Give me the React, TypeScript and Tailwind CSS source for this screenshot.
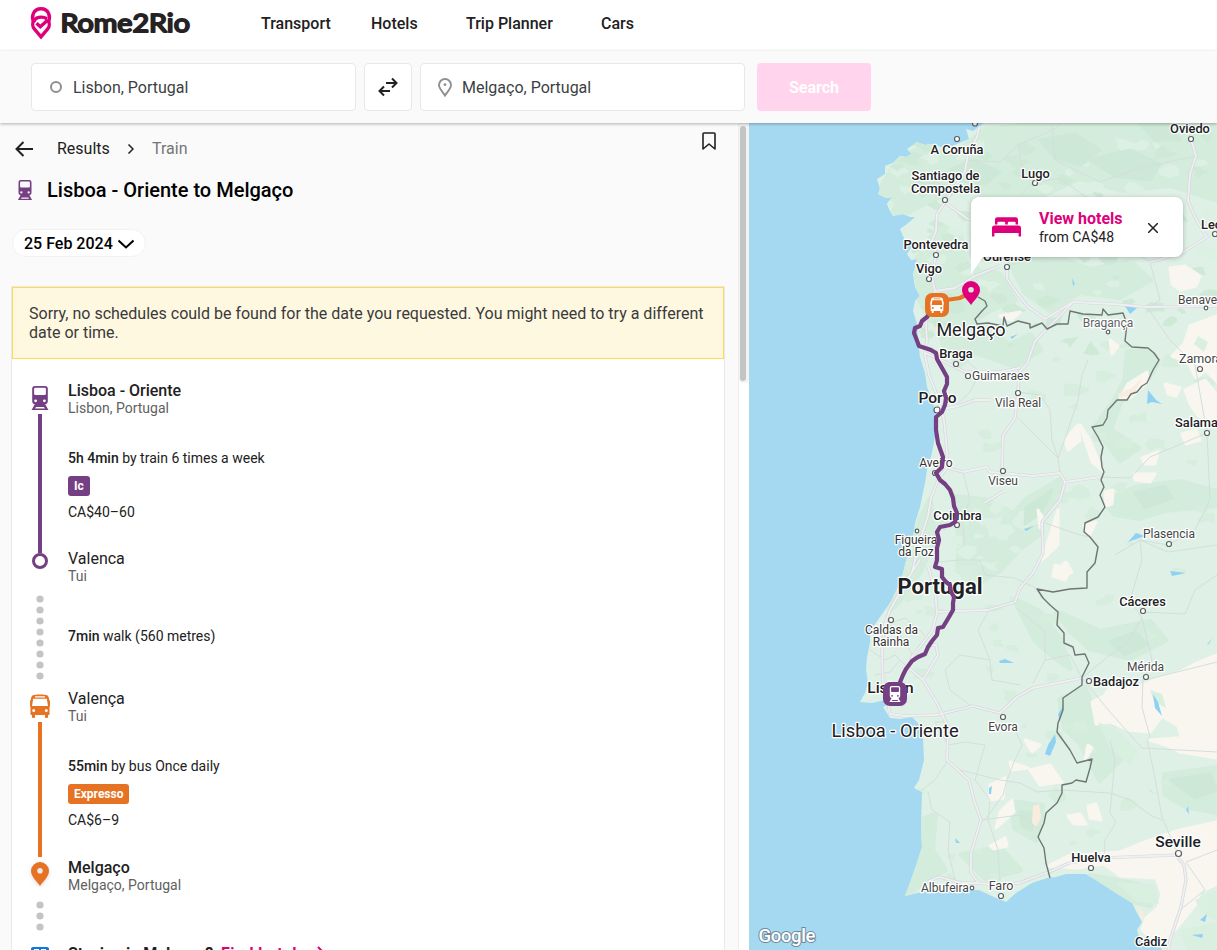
import React from "react";

const PURPLE = "#753f83";
const ORANGE = "#e57323";
const PINK = "#de007b";

function TrainIcon({ className, color }: { className: string; color: string }) {
  return (
    <svg className={className} viewBox="-0.5 0 18 24" fill={color}>
      <path
        fillRule="evenodd"
        d="M3.5 0h10A2.8 2.8 0 0 1 16.3 2.8V15a3.2 3.2 0 0 1-3.2 3.2H3.9A3.2 3.2 0 0 1 .7 15V2.8A2.8 2.8 0 0 1 3.500 0ZM3.800 1.800A1.200 1.200 0 0 0 2.600 3V7.800A1.200 1.200 0 0 0 3.800 9h9.400A1.200 1.200 0 0 0 14.400 7.800V3a1.200 1.200 0 0 0-1.200-1.200ZM4.100 13.400a1.400 1.400 0 1 0 0 2.800 1.400 1.400 0 0 0 0-2.800Zm8.800 0a1.400 1.400 0 1 0 0 2.800 1.400 1.400 0 0 0 0-2.800Z"
      />
      <path d="M3.600 17.500h9.800l2.400 4.500L17 24H0l1.200-2Zm.9 3.600-.8 1.400h9.600l-.8-1.400Z" fillRule="evenodd" />
    </svg>
  );
}

function BusIcon({ className, color }: { className: string; color: string }) {
  return (
    <svg className={className} viewBox="0 0 20 24" fill={color}>
      <path
        fillRule="evenodd"
        d="M3 1.300C5 .2 15 .2 17 1.300 18.800 2.200 19 4 19.200 6l.8 1v5.500l-.5.5v7.200a.8.800 0 0 1-.8.8H18v2a1 1 0 0 1-1 1h-1a1 1 0 0 1-1-1v-2H5v2a1 1 0 0 1-1 1H3a1 1 0 0 1-1-1v-2h-.7a.8.8 0 0 1-.8-.8V13L0 12.500V7l.8-1C1 4 1.200 2.200 3 1.300ZM5 2.200v1.200h10V2.200ZM3.200 4.800 2 12h16l-1.200-7.200ZM3.700 15a1.500 1.500 0 1 0 0 3 1.500 1.500 0 0 0 0-3Zm12.600 0a1.500 1.500 0 1 0 0 3 1.500 1.500 0 0 0 0-3Z"
      />
    </svg>
  );
}

function PinIcon({ className, color }: { className: string; color: string }) {
  return (
    <svg className={className} viewBox="0 0 18 24" fill={color}>
      <path
        fillRule="evenodd"
        d="M9 0a9 9 0 0 1 9 9c0 5.500-6 10.500-9 15C6 19.500 0 14.500 0 9a9 9 0 0 1 9-9Zm0 5.900a2.800 2.800 0 1 0 0 5.600 2.800 2.800 0 0 0 0-5.600Z"
      />
    </svg>
  );
}

function BedIcon({ className, color }: { className: string; color: string }) {
  return (
    <svg className={className} viewBox="0 0 29 20" fill={color}>
      <path d="M3 7.500V2.500A2.300 2.300 0 0 1 5.300.2h18.400A2.300 2.300 0 0 1 26 2.500v5h-2.400V5.800a1 1 0 0 0-1-1h-5.800a1 1 0 0 0-1 1v1.700h-2.600V5.800a1 1 0 0 0-1-1H6.400a1 1 0 0 0-1 1v1.700Z" />
      <path d="M2.500 8.500h24A2.500 2.500 0 0 1 29 11v8.500h-2.400V16H2.400v3.500H0V11a2.500 2.500 0 0 1 2.500-2.500Z" />
    </svg>
  );
}

function Logo() {
  return (
    <svg className="block h-[40px] w-[164px]" viewBox="28 3 164 40" fill="none">
      <g stroke={PINK} strokeWidth="3.400" strokeLinecap="butt" strokeLinejoin="miter">
        <path d="M34 22.500C30.800 17 33 8.700 41 8.700S51.200 17 48 22.500" />
        <path d="M34 22C34.500 17 42 15.800 47 18.800" />
        <path d="M34 20.500c-1.800 2.500-1.700 6 .3 8.300L41 36.800l6.700-8c2-2.300 2.100-5.800.3-8.300" />
        <path d="M36.500 23.200 40.300 26.800 47.800 20" />
      </g>
      <text
        x="60.500"
        y="31.500"
        fill="#262223"
        stroke="#262223"
        strokeWidth="1.900"
        strokeLinejoin="round"
        fontSize="25.500"
        fontWeight="400"
        textLength="129.500"
        lengthAdjust="spacingAndGlyphs"
        className="font-['Lato',sans-serif]"
      >
        Rome2Rio
      </text>
    </svg>
  );
}

function Header() {
  return (
    <header className="flex h-[51px] shrink-0 items-start bg-white text-base leading-[19px] font-medium text-[#212121]">
      <div className="w-[261px] pt-[3px] pl-7">
        <Logo />
      </div>
      <nav className="flex pt-3.5">
        <span className="w-[110px]">Transport</span>
        <span className="w-[95px]">Hotels</span>
        <span className="w-[135px]">Trip Planner</span>
        <span>Cars</span>
      </nav>
    </header>
  );
}

function SearchBar() {
  return (
    <div className="relative z-10 flex h-[72px] shrink-0 items-start bg-[#fafafa] pt-3 pl-[31px] text-base text-[#3c3f44] shadow-[0_1px_3px_rgba(0,0,0,0.3)]">
      <div className="flex h-12 w-[325px] items-center rounded-[4px] border border-[#e8e8e8] bg-white pl-[18px]">
        <span className="h-3 w-3 rounded-full border-2 border-[#8f8f8f]" />
        <span className="mt-0.5 ml-[11px]">Lisbon, Portugal</span>
      </div>
      <div className="ml-2 flex h-12 w-12 items-center justify-center rounded-[4px] border border-[#e8e8e8] bg-white">
        <svg className="h-5 w-5" viewBox="0 0 20 20" fill="none" stroke="#212121" strokeWidth="2">
          <path d="M8 6h10.500M14 1.500 18.500 6 14 10.500M12 14H1.500M6 9.500 1.500 14 6 18.500" />
        </svg>
      </div>
      <div className="ml-2 flex h-12 w-[325px] items-center rounded-[4px] border border-[#e8e8e8] bg-white pl-[17px]">
        <svg className="h-[19px] w-[14px]" viewBox="0 0 14 19" fill="none" stroke="#8f8f8f" strokeWidth="1.900">
          <path d="M7 1a6 6 0 0 1 6 6c0 3.800-4 7-6 10.500C5 14 1 10.800 1 7a6 6 0 0 1 6-6Z" />
          <circle cx="7" cy="6.700" r="1.400" fill="#8f8f8f" stroke="none" />
        </svg>
        <span className="mt-0.5 ml-[10px]">Melgaço, Portugal</span>
      </div>
      <div className="ml-3 flex h-12 w-[114px] items-center justify-center rounded-[4px] bg-[#ffd4ec] pt-px font-bold text-white">
        Search
      </div>
    </div>
  );
}

function Place({ name, area, medium }: { name: string; area: string; medium?: boolean }) {
  return (
    <div>
      <div className={medium ? "text-base leading-[19px] font-medium text-[#212121]" : "text-base leading-[19px] text-[#212121]"}>
        {name}
      </div>
      <div className="text-sm leading-4 text-[#616161]">{area}</div>
    </div>
  );
}

function Dots({ count }: { count: number }) {
  return (
    <svg className="w-2 shrink-0" height={count * 11} viewBox={`0 0 8 ${count * 11}`} fill="#c4c4c4">
      {Array.from({ length: count }, (_, i) => (
        <circle key={i} cx="4" cy={4 + i * 11} r="3.600" />
      ))}
    </svg>
  );
}

function Leg({ time, how, badge, badgeClass, price }: { time: string; how: string; badge: string; badgeClass: string; price: string }) {
  return (
    <div className="flex flex-col items-start pt-[33px] text-sm text-[#212121]">
      <div className="leading-[18px]">
        <span className="font-medium">{time}</span> {how}
      </div>
      <span className={badgeClass}>{badge}</span>
      <div className="mt-[7px] leading-[18px]">{price}</div>
    </div>
  );
}

function Timeline() {
  return (
    <div className="pt-[22px]">
      <div className="flex h-[168px]">
        <div className="flex w-14 flex-col items-center pt-[5px]">
          <TrainIcon className="h-6 w-[18px] shrink-0" color={PURPLE} />
          <div className="mt-1 h-[139px] w-1 shrink-0 bg-[#753f83]" />
        </div>
        <div>
          <Place name="Lisboa - Oriente" area="Lisbon, Portugal" medium />
          <Leg
            time="5h 4min"
            how="by train 6 times a week"
            badge="Ic"
            badgeClass="mt-[9px] h-5 rounded-[3px] bg-[#753f83] px-1.5 text-xs leading-5 font-bold text-white"
            price="CA$40–60"
          />
        </div>
      </div>
      <div className="flex h-[140px]">
        <div className="flex w-14 flex-col items-center pt-1">
          <span className="mb-[26px] h-4 w-4 rounded-full border-[3.5px] border-[#753f83] bg-white" />
          <Dots count={8} />
        </div>
        <div>
          <Place name="Valenca" area="Tui" />
          <div className="pt-[43px] text-sm leading-[18px] text-[#212121]">
            <span className="font-medium">7min</span> walk (560 metres)
          </div>
        </div>
      </div>
      <div className="flex h-[169px]">
        <div className="flex w-14 flex-col items-center pt-[5px]">
          <BusIcon className="h-6 w-5 shrink-0" color={ORANGE} />
          <div className="mt-1 h-[135px] w-1 shrink-0 bg-[#e57323]" />
        </div>
        <div>
          <Place name="Valença" area="Tui" />
          <Leg
            time="55min"
            how="by bus Once daily"
            badge="Expresso"
            badgeClass="mt-[9px] h-5 rounded-[3px] bg-[#e57323] px-1.5 text-xs leading-5 font-bold text-white"
            price="CA$6–9"
          />
        </div>
      </div>
      <div className="flex h-[86px]">
        <div className="flex w-14 flex-col items-center pt-1">
          <PinIcon className="mb-[15px] h-6 w-[18px] shrink-0 drop-shadow-sm" color={ORANGE} />
          <Dots count={3} />
        </div>
        <Place name="Melgaço" area="Melgaço, Portugal" medium />
      </div>
      <div className="flex">
        <div className="flex w-14 justify-center pt-[3px]">
          <svg className="h-4 w-[18px]" viewBox="0 0 18 16">
            <rect width="18" height="16" rx="2" fill="#0b79e0" />
            <path d="M3 2h5v3H3ZM10 2h5v3h-5Z" fill="#ffffff" />
          </svg>
        </div>
        <div className="flex text-base leading-[19px] font-bold text-[#212121]">
          <span className="w-[153px]">Staying in Melgaço?</span>
          <span className="tracking-[0.03em] text-[#de007b]">Find hotels</span>
          <svg className="mt-0.5 ml-1.5 h-3 w-3" viewBox="0 0 12 12" fill="none" stroke={PINK} strokeWidth="2">
            <path d="M0 6h10.500M6 1l5 5-5 5" />
          </svg>
        </div>
      </div>
    </div>
  );
}

function Panel() {
  return (
    <section className="flex w-[738px] shrink-0 flex-col overflow-hidden bg-[#fafafa]">
      <div className="flex h-[50px] shrink-0 items-center pt-[2px]">
        <svg className="ml-[15px] h-4 w-[18px]" viewBox="0 0 18 16" fill="none" stroke="#212121" strokeWidth="2">
          <path d="M18 8H1.500M8.500 1 1.500 8l7 7" />
        </svg>
        <span className="ml-6 w-[70px] text-base text-[#212121]">Results</span>
        <svg className="h-[10px] w-[7px]" viewBox="0 0 7 10" fill="none" stroke="#212121" strokeWidth="1.500">
          <path d="M1.500.5 6 5 1.500 9.500" />
        </svg>
        <span className="ml-[18px] text-base text-[#757575]">Train</span>
        <svg className="mt-[-16px] mr-[22px] ml-auto h-[18px] w-[14px]" viewBox="0 0 14 18" fill="none" stroke="#212121" strokeWidth="1.600" strokeLinejoin="round">
          <path d="M1 2a1 1 0 0 1 1-1h10a1 1 0 0 1 1 1v15l-6-5-6 5Z" />
        </svg>
      </div>
      <div className="flex h-[34px] shrink-0 items-center pl-[17px]">
        <TrainIcon className="h-5 w-4" color={PURPLE} />
        <h1 className="ml-[14px] text-xl font-medium text-black">Lisboa - Oriente to Melgaço</h1>
      </div>
      <div className="mt-[22px] ml-3 flex h-7 w-[134px] shrink-0 items-center rounded-full border border-[#f2f2f2] bg-white pt-0.5 pl-[11px] text-base font-medium text-black">
        25 Feb 2024
        <svg className="ml-[5px] h-[10px] w-4" viewBox="0 0 16 10" fill="none" stroke="#000000" strokeWidth="2">
          <path d="m.5 1.500 7.500 7 7.500-7" />
        </svg>
      </div>
      <div className="mt-[30px] ml-3 h-[663px] w-[712px] shrink-0 bg-white shadow-[0_0_0_1px_#e9e9e9]">
        <div className="h-[72px] border border-[#fdd95a] bg-[#fff8e1] pt-4 pl-4 text-base leading-[19px] text-[#3a3a3a]">
          Sorry, no schedules could be found for the date you requested. You might need to try a different
          <br />
          date or time.
        </div>
        <Timeline />
      </div>
    </section>
  );
}

const COAST =
  "M985 122 973 131 966 129 969 139 957 144 945 149 938 146 932 144 925 145 917 142 907 149 912 154 906 157 900 156 893 163 885 166 885 174 877 179 880 189 878 194 886 198 892 197 887 204 890 211 893 216 903 214 910 217 915 217 907 224 900 229 903 236 907 244 915 242 907 254 911 260 917 259 915 267 913 274 915 287 920 296 915 301 913 311 917 324 918 341 920 357 925 373 927 387 932 400 935 410 936 423 935 437 932 453 927 470 925 483 920 507 915 523 913 537 908 553 902 577 898 587 890 603 880 617 870 632 870 643 867 657 866 670 868 683 865 693 860 702 872 703 885 700 897 686 901 690 894 702 883 707 890 718 900 719 912 717 918 723 923 737 924 760 919 780 914 788 922 792 921 823 922 847 917 863 911 880 905 896 922 892 949 890 962 890 979 890 996 898 1006 902 1016 893 1032 883 1047 878 1056 877 1066 874 1086 874 1099 882 1119 895 1132 903 1137 913 1142 922 1137 930 1139 937 1149 940 1157 938 1162 950 1217 950 1217 122Z";

const BORDER =
  "M978 297 985 301 987 306 982 311 975 319 977 324 988 323 1003 326 1004 317 1007 326 1018 321 1030 324 1030 328 1042 323 1047 329 1057 324 1068 324 1070 311 1083 314 1102 315 1103 309 1108 315 1123 313 1127 324 1125 341 1132 347 1148 348 1154 353 1159 360 1153 370 1147 383 1142 386 1137 392 1131 394 1127 400 1117 400 1108 410 1107 418 1103 425 1092 427 1098 437 1103 447 1101 457 1102 467 1104 472 1101 480 1104 487 1100 495 1105 507 1098 517 1085 523 1084 532 1090 537 1098 547 1095 563 1087 572 1087 588 1070 589 1053 592 1037 589 1043 598 1050 605 1058 612 1057 625 1064 633 1064 643 1073 647 1075 655 1085 654 1089 663 1082 677 1082 685 1063 698 1063 710 1058 723 1057 732 1070 750 1077 763 1092 759 1090 768 1086 782 1076 780 1072 783 1062 785 1062 793 1057 803 1046 813 1044 823 1038 837 1044 848 1046 863 1050 878";

const TRAIN_ROUTE =
  "M931 311 927 317 922 321 920 326 915 328 914 333 916 338 919 346 925 348 931 350 936 353 937 359 942 368 947 377 947 384 944 391 946 398 945 405 942 412 936 417 936 430 938 443 943 457 942 467 936 473 940 480 945 484 950 490 953 498 954 506 957 513 955 522 950 525 940 527 937 532 939 540 937 548 937 560 935 567 942 569 942 577 946 582 950 585 951 592 954 597 953 603 953 610 949 617 943 627 938 628 937 635 932 641 928 647 925 654 918 657 912 661 906 669 903 675 898 687 895 694";

const FOREST = [
  "M900 156 930 146 960 150 985 130 1040 124 1217 124 1217 200 1170 185 1120 190 1080 178 1040 196 1000 205 960 190 930 200 905 214 895 212 890 200 880 190Z",
  "M915 262 940 225 960 235 965 262 1000 275 1015 300 990 310 960 330 930 320 920 300Z",
  "M1010 262 1060 258 1090 270 1130 262 1150 280 1120 297 1080 292 1050 310 1025 292Z",
  "M940 330 975 325 1010 345 1030 335 1040 350 1015 366 975 352 960 365 945 350Z",
  "M1128 352 1150 352 1158 362 1146 382 1120 402 1110 430 1138 448 1120 460 1105 440 1096 427 1116 398 1125 380Z",
  "M1105 502 1135 488 1180 482 1217 492 1217 505 1165 510 1140 518 1115 514Z",
  "M1026 500 1060 480 1058 500 1040 524 1020 528 1010 518Z",
  "M955 497 985 500 1010 512 1042 532 1020 548 1000 570 975 585 958 570 960 545Z",
  "M1057 612 1100 632 1150 622 1165 640 1130 658 1090 648 1070 630Z",
  "M1015 600 1040 612 1060 640 1070 668 1052 655 1035 640Z",
  "M1060 700 1085 688 1100 730 1120 760 1100 780 1080 742 1065 728Z",
  "M1165 775 1217 768 1217 812 1185 806 1165 794Z",
  "M1012 802 1042 806 1040 822 1036 840 1015 828Z",
  "M921 820 935 815 932 850 945 870 925 882 906 895 920 850Z",
  "M962 855 1000 848 1020 870 985 878Z",
  "M1090 876 1140 885 1150 905 1135 902Z",
  "M920 520 930 500 935 540 918 575 900 600 890 610 905 575Z",
];

const FOREST_DARK = [
  "M950 170 975 160 1000 172 985 184 960 180Z",
  "M1040 140 1075 134 1100 150 1080 165 1055 158Z",
  "M1090 160 1130 150 1160 164 1150 180 1115 176Z",
  "M915 180 935 172 940 188 922 196Z",
  "M1140 124 1170 124 1180 140 1155 140Z",
  "M1110 642 1135 632 1148 644 1125 655Z",
  "M1170 780 1210 774 1217 790 1195 798Z",
  "M1020 812 1035 812 1032 830 1022 826Z",
  "M1135 493 1165 486 1172 498 1145 508Z",
  "M1026 508 1052 490 1040 514 1025 524Z",
];

const FIELDS = [
  "M1170 268 1185 266 1200 276 1196 286 1180 290 1172 284Z",
  "M1190 326 1217 316 1217 382 1206 370 1196 378 1188 362 1172 356 1184 344Z",
  "M1165 384 1180 388 1176 396 1168 394Z",
  "M1185 390 1205 380 1217 395 1217 420 1198 416 1190 404Z",
  "M1182 434 1196 430 1200 440 1186 444Z",
  "M1120 398 1128 384 1147 372 1148 382 1130 398Z",
  "M1080 425 1090 440 1102 470 1092 462Z",
  "M1065 440 1078 425 1080 440 1068 450Z",
  "M1134 474 1155 474 1150 482 1135 480Z",
  "M1105 492 1113 490 1112 504 1106 506Z",
  "M1142 458 1158 452 1155 464 1145 464Z",
  "M1110 340 1118 346 1112 354Z",
  "M1000 316 1020 312 1012 320Z",
  "M1038 510 1044 520 1040 528Z",
  "M1046 548 1058 510 1058 545 1042 560Z",
  "M1055 565 1070 570 1065 580 1053 576Z",
  "M1084 526 1096 522 1090 534Z",
  "M1092 702 1104 696 1116 678 1140 686 1160 678 1180 672 1195 664 1217 655 1217 758 1200 752 1185 748 1178 726 1162 716 1150 732 1128 730 1110 722 1096 724Z",
  "M1150 740 1217 735 1217 758 1180 752 1165 745Z",
  "M1030 770 1050 765 1062 782 1040 785Z",
  "M990 785 1005 778 1003 798 990 800Z",
  "M1000 812 1012 800 1014 812 996 828Z",
  "M990 846 1005 838 1007 846 994 849Z",
  "M1068 816 1080 814 1086 824 1074 824Z",
  "M1088 806 1096 804 1101 820 1090 818Z",
  "M1048 866 1068 856 1120 852 1150 840 1180 830 1217 822 1217 884 1200 892 1196 904 1175 930 1160 945 1142 930 1146 918 1158 908 1162 894 1156 878 1120 876 1104 864 1078 868Z",
  "M1085 760 1092 748 1088 745Z",
  "M1010 762 1028 768 1012 770Z",
  "M1025 740 1040 745 1032 752Z",
  "M1054 572 1066 562 1072 572 1062 578Z",
];

const LAKES = [
  "M1055 734 1056 742 1050 756 1045 754 1048 745Z",
  "M1148 390 1156 400 1162 404 1152 402 1147 404Z",
  "M989 788 992 786 991 794 989 794Z",
  "M1153 694 1158 702 1162 716 1155 708Z",
  "M999 661 1005 659 1014 663 1000 663Z",
  "M1058 714 1064 704 1060 722Z",
  "M1150 790 1148 789 1156 795Z",
  "M1186 810 1189 814 1188 806Z",
  "M1200 920 1207 914 1205 922Z",
  "M1192 935 1203 934 1202 938Z",
  "M1125 306 1137 308 1130 314Z",
  "M1072 278 1075 284 1073 286Z",
  "M1010 337 1018 334 1012 339Z",
  "M1136 533 1145 536 1128 542Z",
  "M1207 645 1212 638 1209 644Z",
  "M955 838 960 843 956 843Z",
  "M1170 571 1186 573 1172 576Z",
  "M1024 529 1034 526 1026 531Z",
];

const MAJOR_ROADS = [
  "M980 124 977 137 968 154 965 171 955 187 945 202 937 214 936 231 932 241 936 254 932 277 935 291 929 305 926 325 927 341 925 355 929 375 938 398 944 420 946 440 948 466 938 480 931 498 928 516 920 540 912 572",
  "M945 202 958 212 968 219 1000 222",
  "M1191 139 1196 156 1190 174 1188 201 1197 221 1207 237 1182 253 1150 262",
  "M1007 267 1007 279 1018 294 1027 306 1045 319 1073 302 1113 304 1147 307 1217 306",
  "M935 291 955 288 975 276 1000 266",
  "M1073 302 1047 329 1035 341 1027 364 1019 372 1018 392 1015 418 1003 435 1002 468",
  "M925 353 945 362 965 372 1000 372 1019 368",
  "M938 410 958 406 975 400 990 400",
  "M948 468 963 472 987 467 990 472 1003 473 1033 476 1060 473 1065 482 1100 477",
  "M1065 482 1060 500 1042 522 1043 553 1033 573 1020 588 1015 602 988 610 957 611 938 612",
  "M984 503 1004 491",
  "M920 560 907 580 890 610 885 623 882 650 883 687",
  "M928 566 935 590 937 613 932 631 912 657 909 668 923 680 937 703 948 727 947 760 969 780 974 800 981 820 971 853 971 873 979 883 996 885 1019 883 1049 872 1069 863 1100 858 1177 855",
  "M923 680 930 668 938 655 936 645 930 645",
  "M885 690 890 714 905 716 937 715 973 706 1000 713 1017 697 1033 688 1082 678",
  "M929 881 939 877 962 883 979 883",
  "M1178 858 1184 865 1186 880 1181 907 1171 937 1168 950",
];

const MINOR_ROADS = [
  "M1100 477 1130 478 1150 457 1207 433",
  "M935 413 945 402 957 404 970 392 980 372 968 362",
  "M965 160 1000 162 1018 145 1053 130 1060 124",
  "M1018 145 1022 165 1035 180 1020 195",
  "M1035 183 1060 178 1090 200 1100 230 1130 250 1150 262",
  "M1052 124 1055 160 1100 182 1140 168 1196 156",
  "M1088 360 1082 375 1078 400 1068 430 1058 458 1060 473",
  "M1018 392 1040 395 1050 410 1052 440 1058 458",
  "M1018 418 1040 440 1058 458",
  "M963 472 970 500 962 520 965 545",
  "M938 562 960 560 980 560 985 575 1015 578 1040 590",
  "M1017 608 1045 632 1045 660 1033 683",
  "M988 612 978 630 990 660 992 680 1020 685",
  "M1045 660 1070 655 1082 678",
  "M1082 678 1110 655 1127 643 1142 618 1130 600 1142 560 1140 540 1168 552 1217 545",
  "M1142 618 1152 660 1143 680 1142 707 1150 737 1147 740 1154 773 1162 817 1176 850",
  "M1145 680 1217 662",
  "M1082 678 1110 712 1142 748 1217 752",
  "M1142 612 1185 614 1195 590 1217 575",
  "M1207 433 1210 500 1195 530 1168 545 1140 540 1115 555",
  "M1003 725 1015 730 1022 745 1014 762 1007 780 1003 795 985 820",
  "M960 770 1000 780 1020 783 1037 792 1062 790 1110 793",
  "M981 820 1020 815 1040 830",
  "M985 745 975 780 990 800 988 820 998 850 1000 880",
  "M1110 740 1115 760 1110 813 1116 822 1105 840 1104 856",
  "M1110 793 1130 800 1150 815 1162 820",
  "M922 790 935 780 948 760",
  "M928 792 932 810 950 822 948 850 955 880",
  "M870 650 885 660 895 655 905 665",
  "M885 625 905 618 925 635",
  "M895 632 905 640 912 655",
  "M875 675 890 672 900 660",
  "M970 705 950 690 945 670 960 655 990 660",
  "M1042 522 1080 535 1090 537",
  "M1150 262 1160 300 1150 307",
  "M1147 307 1170 340 1195 365 1207 433",
  "M1217 850 1186 862 1205 890 1180 910",
  "M947 722 935 722 948 745 965 742 985 745",
];

function scatterPatches(count: number, x0: number, y0: number, w: number, h: number, seed: number) {
  let s = seed;
  const rnd = () => {
    s = (s * 16807) % 2147483647;
    return s / 2147483647;
  };
  return Array.from({ length: count }, () => {
    const cx = x0 + rnd() * w;
    const cy = y0 + rnd() * h;
    const r = 3 + rnd() * 7;
    const pts = Array.from({ length: 8 }, (_, i) => {
      const a = (i / 8) * Math.PI * 2;
      const k = r * (0.4 + rnd() * 0.9);
      return `${(cx + Math.cos(a) * k * 1.3).toFixed(1)} ${(cy + Math.sin(a) * k * 0.8).toFixed(1)}`;
    });
    return `M${pts.join(" ")}Z`;
  });
}

const NORTH_CLEARINGS = scatterPatches(60, 880, 130, 337, 190, 41);
const NORTH_WOODS = scatterPatches(70, 890, 130, 327, 220, 97);
const WOODS = scatterPatches(75, 910, 340, 300, 540, 733);
const CENTRE_CLEARINGS = scatterPatches(25, 945, 495, 90, 90, 1201);

type Label = {
  t: string;
  x: number;
  y: number;
  s?: number;
  w?: number;
  c?: string;
  a?: "start" | "middle" | "end";
};

const LABELS: Label[] = [
  { t: "A Coruña", x: 957, y: 154, w: 500 },
  { t: "Santiago de", x: 945.500, y: 180, w: 500 },
  { t: "Compostela", x: 945.500, y: 193, w: 500 },
  { t: "Lugo", x: 1035.500, y: 177.500, w: 500 },
  { t: "Oviedo", x: 1190, y: 133, w: 500 },
  { t: "León", x: 1201, y: 229, w: 500, a: "start" },
  { t: "Pontevedra", x: 936, y: 249, w: 500 },
  { t: "Vigo", x: 929, y: 272.500, w: 500 },
  { t: "Ourense", x: 1007, y: 261, w: 500 },
  { t: "Benave", x: 1178, y: 303.500, s: 12, a: "start", c: "#444746" },
  { t: "Bragança", x: 1108, y: 327, s: 12, c: "#5f6368" },
  { t: "Melgaço", x: 971, y: 335.500, s: 18 },
  { t: "Braga", x: 956, y: 357.500, w: 500 },
  { t: "Zamora", x: 1179, y: 363, s: 12.500, a: "start", c: "#444746" },
  { t: "Guimaraes", x: 972, y: 380, s: 12, a: "start", c: "#444746" },
  { t: "Porto", x: 937.500, y: 403, s: 15.500, w: 500 },
  { t: "Vila Real", x: 1018, y: 407, s: 12, c: "#444746" },
  { t: "Salama", x: 1175, y: 427, w: 500, a: "start" },
  { t: "Aveiro", x: 936, y: 467, s: 12, c: "#333333" },
  { t: "Viseu", x: 1003, y: 485, s: 12, c: "#444746" },
  { t: "Coimbra", x: 957.500, y: 519.500, w: 500 },
  { t: "Plasencia", x: 1169, y: 538, s: 12, c: "#444746" },
  { t: "Figueira", x: 916, y: 544, s: 12, c: "#333333" },
  { t: "da Foz", x: 916, y: 556, s: 12, c: "#333333" },
  { t: "Portugal", x: 940, y: 593.500, s: 22, w: 700 },
  { t: "Cáceres", x: 1142.500, y: 605.500, w: 500 },
  { t: "Caldas da", x: 891.500, y: 634, s: 12, c: "#333333" },
  { t: "Rainha", x: 891, y: 646, s: 12, c: "#333333" },
  { t: "Mérida", x: 1145.500, y: 671, s: 12, c: "#444746" },
  { t: "Badajoz", x: 1093, y: 685.500, w: 500, a: "start" },
  { t: "Lisbon", x: 890.500, y: 692.500, s: 15.500, w: 500 },
  { t: "Evora", x: 1003, y: 731, s: 12, c: "#444746" },
  { t: "Lisboa - Oriente", x: 895, y: 736.500, s: 18.300 },
  { t: "Seville", x: 1178, y: 846.500, s: 15.500, w: 500 },
  { t: "Huelva", x: 1091, y: 862, w: 500 },
  { t: "Albufeira", x: 921, y: 892, s: 12, a: "start", c: "#444746" },
  { t: "Faro", x: 1001, y: 890, s: 12.500, c: "#444746" },
  { t: "Cádiz", x: 1151, y: 946, w: 500 },
];

const TOWNS: [number, number, number][] = [
  [957, 139, 2.5], [975, 123.500, 2.5], [945, 200, 2.5], [1035, 183, 2.5], [1191, 139, 2.5], [936, 255, 2.5], [929, 279, 2.5],
  [1007, 267, 2.5], [1215, 234, 2.5], [1206, 308, 1.8], [1108, 332, 1.8], [956, 364, 2.5], [1200, 369, 2.5], [968, 376, 2.5],
  [937, 410, 3], [1018, 393, 2.5], [1207, 433, 2.5], [935, 473, 2.5], [1003, 471, 2.5], [957, 525, 2.5], [917, 531, 1.8],
  [1169, 544, 2.5], [1143, 611, 2.5], [891, 620, 2.5], [1146, 677, 2.5], [1089, 681, 2.5], [1003, 717, 2.5], [1178.500, 853.500, 3],
  [1091, 868, 2.5], [972, 888, 1.8], [1001, 896, 2.5],
];

function RouteMap() {
  return (
    <svg className="block h-[827px] w-[468px] font-['Roboto',sans-serif]" viewBox="749 123 468 827">
      <defs>
        <clipPath id="land">
          <path d={COAST} />
        </clipPath>
      </defs>
      <rect x="749" y="122" width="468" height="828" fill="#a5d9f2" />
      <path d={COAST} fill="#dff1e6" />
      <g clipPath="url(#land)">
        {FOREST.map((d) => <path key={d} d={d} fill="#d4ecdc" stroke="#d4ecdc" strokeWidth="6" strokeLinejoin="round" />)}
        {WOODS.map((d) => <path key={d} d={d} fill="#d7eede" />)}
        {NORTH_CLEARINGS.map((d) => <path key={d} d={d} fill="#dcf0e3" />)}
        {CENTRE_CLEARINGS.map((d) => <path key={d} d={d} fill="#dcf0e3" />)}
        {NORTH_WOODS.map((d) => <path key={d} d={d} fill="#cfe9d7" />)}
        {FOREST_DARK.map((d) => <path key={d} d={d} fill="#cde8d6" stroke="#cde8d6" strokeWidth="3" strokeLinejoin="round" />)}
        {FIELDS.map((d) => <path key={d} d={d} fill="#f9f6f0" stroke="#f9f6f0" strokeWidth="3" strokeLinejoin="round" />)}
        <g fill="#d9efdf">
          <path d="m1098 722 22 10 18 20-8 14-20-18Z" />
          <path d="m1150 690 12 4 4 14-12-6Z" />
          <path d="m1116 882 39 2 4 20-22-2Z" />
          <path d="m1195 900 22-10v30l-14-6Z" />
          <path d="m1180 930 37-8v28h-30Z" />
          <path d="m1198 336 10 6-4 10-10-8Z" />
        </g>
        <g fill="#f9ecdd">
          <path d="m1033 806 6-2 2 14-6 10-3-6Z" />
          <path d="m1118 394 14-6 10-10-8 16-14 4Z" />
          <path d="m1136 905 8 8-1 10Z" />
        </g>
        {LAKES.map((d) => <path key={d} d={d} fill="#8fd1f3" />)}
        <g fill="none" stroke="#d4dedb" strokeWidth="1" strokeLinejoin="round">
          {MINOR_ROADS.map((d) => <path key={d} d={d} />)}
        </g>
        <g fill="none" stroke="#d3d8dc" strokeWidth="3.200" strokeLinejoin="round">
          {MAJOR_ROADS.map((d) => <path key={d} d={d} />)}
        </g>
        <g fill="none" stroke="#f0f0f3" strokeWidth="1.800" strokeLinejoin="round">
          {MAJOR_ROADS.map((d) => <path key={d} d={d} />)}
        </g>
      </g>
      <path d={BORDER} fill="none" stroke="#6d7673" strokeWidth="1.400" strokeLinejoin="round" />
      {TOWNS.map(([x, y, r]) => (
        <circle key={`${x}-${y}`} cx={x} cy={y} r={r} fill="#ffffff" stroke="#5b5f60" strokeWidth="1.200" />
      ))}
      <g stroke="#ffffff" strokeWidth="2.500" strokeLinejoin="round" paintOrder="stroke">
        {LABELS.map(({ t, x, y, s = 12.8, w = 400, c = "#202124", a = "middle" }) => (
          <text key={t} x={x} y={y} fontSize={s} fontWeight={w} fill={c} textAnchor={a}>
            {t}
          </text>
        ))}
      </g>
      <path d={TRAIN_ROUTE} fill="none" stroke={PURPLE} strokeWidth="4.200" strokeLinejoin="round" />
      <path d="M940 301 953 299 960 298 966 295" fill="none" stroke={ORANGE} strokeWidth="4.200" />
      <rect x="925" y="293" width="24" height="24" rx="7" fill={ORANGE} />
      <rect x="883" y="682" width="24" height="24" rx="7" fill={PURPLE} />
      <text
        x="758.500"
        y="942"
        fontSize="18.500"
        fontWeight="500"
        fill="#ffffff"
        stroke="#72899a"
        strokeWidth="2"
        paintOrder="stroke"
        textLength="57"
      >
        Google
      </text>
    </svg>
  );
}

function MapArea() {
  return (
    <section className="relative min-w-0 flex-1 overflow-hidden">
      <RouteMap />
      <BusIcon className="absolute top-[174px] left-[181px] h-4 w-[14px]" color="#ffffff" />
      <TrainIcon className="absolute top-[563px] left-[140px] h-4 w-3" color="#ffffff" />
      <div className="absolute top-[74px] left-[222px] flex h-[60px] w-[212px] items-center rounded-lg rounded-bl-none bg-white pl-[21px] shadow-[0_1px_5px_rgba(0,0,0,0.25)]">
        <BedIcon className="h-5 w-[29px]" color={PINK} />
        <div className="ml-[18px] w-[109px]">
          <div className="text-base leading-[19px] font-bold text-[#de007b]">View hotels</div>
          <div className="text-sm leading-[18px] text-[#212121]">from CA$48</div>
        </div>
        <svg className="mt-0.5 h-[10px] w-[10px]" viewBox="0 0 10 10" stroke="#212121" strokeWidth="1.500">
          <path d="m0 0 10 10M10 0 0 10" />
        </svg>
      </div>
      <svg className="absolute top-[132px] left-[222px] h-5 w-3" viewBox="0 0 12 20">
        <path d="M0 0h12v2L0 19Z" fill="#ffffff" />
      </svg>
      <PinIcon className="absolute top-[158px] left-[213px] h-6 w-[18px]" color={PINK} />
    </section>
  );
}

export default function App() {
  return (
    <div className="flex h-[950px] w-[1217px] flex-col overflow-hidden bg-white font-['Roboto',sans-serif]">
      <Header />
      <SearchBar />
      <main className="flex min-h-0 flex-1">
        <Panel />
        <div className="w-[11px] shrink-0 border-l border-[#eeeeee] bg-white">
          <div className="h-[260px] rounded-b bg-[#f3f3f3] pt-[3px] pl-px">
            <div className="h-[255px] w-[6px] rounded-full bg-[#c4c4c4]" />
          </div>
        </div>
        <MapArea />
      </main>
    </div>
  );
}
